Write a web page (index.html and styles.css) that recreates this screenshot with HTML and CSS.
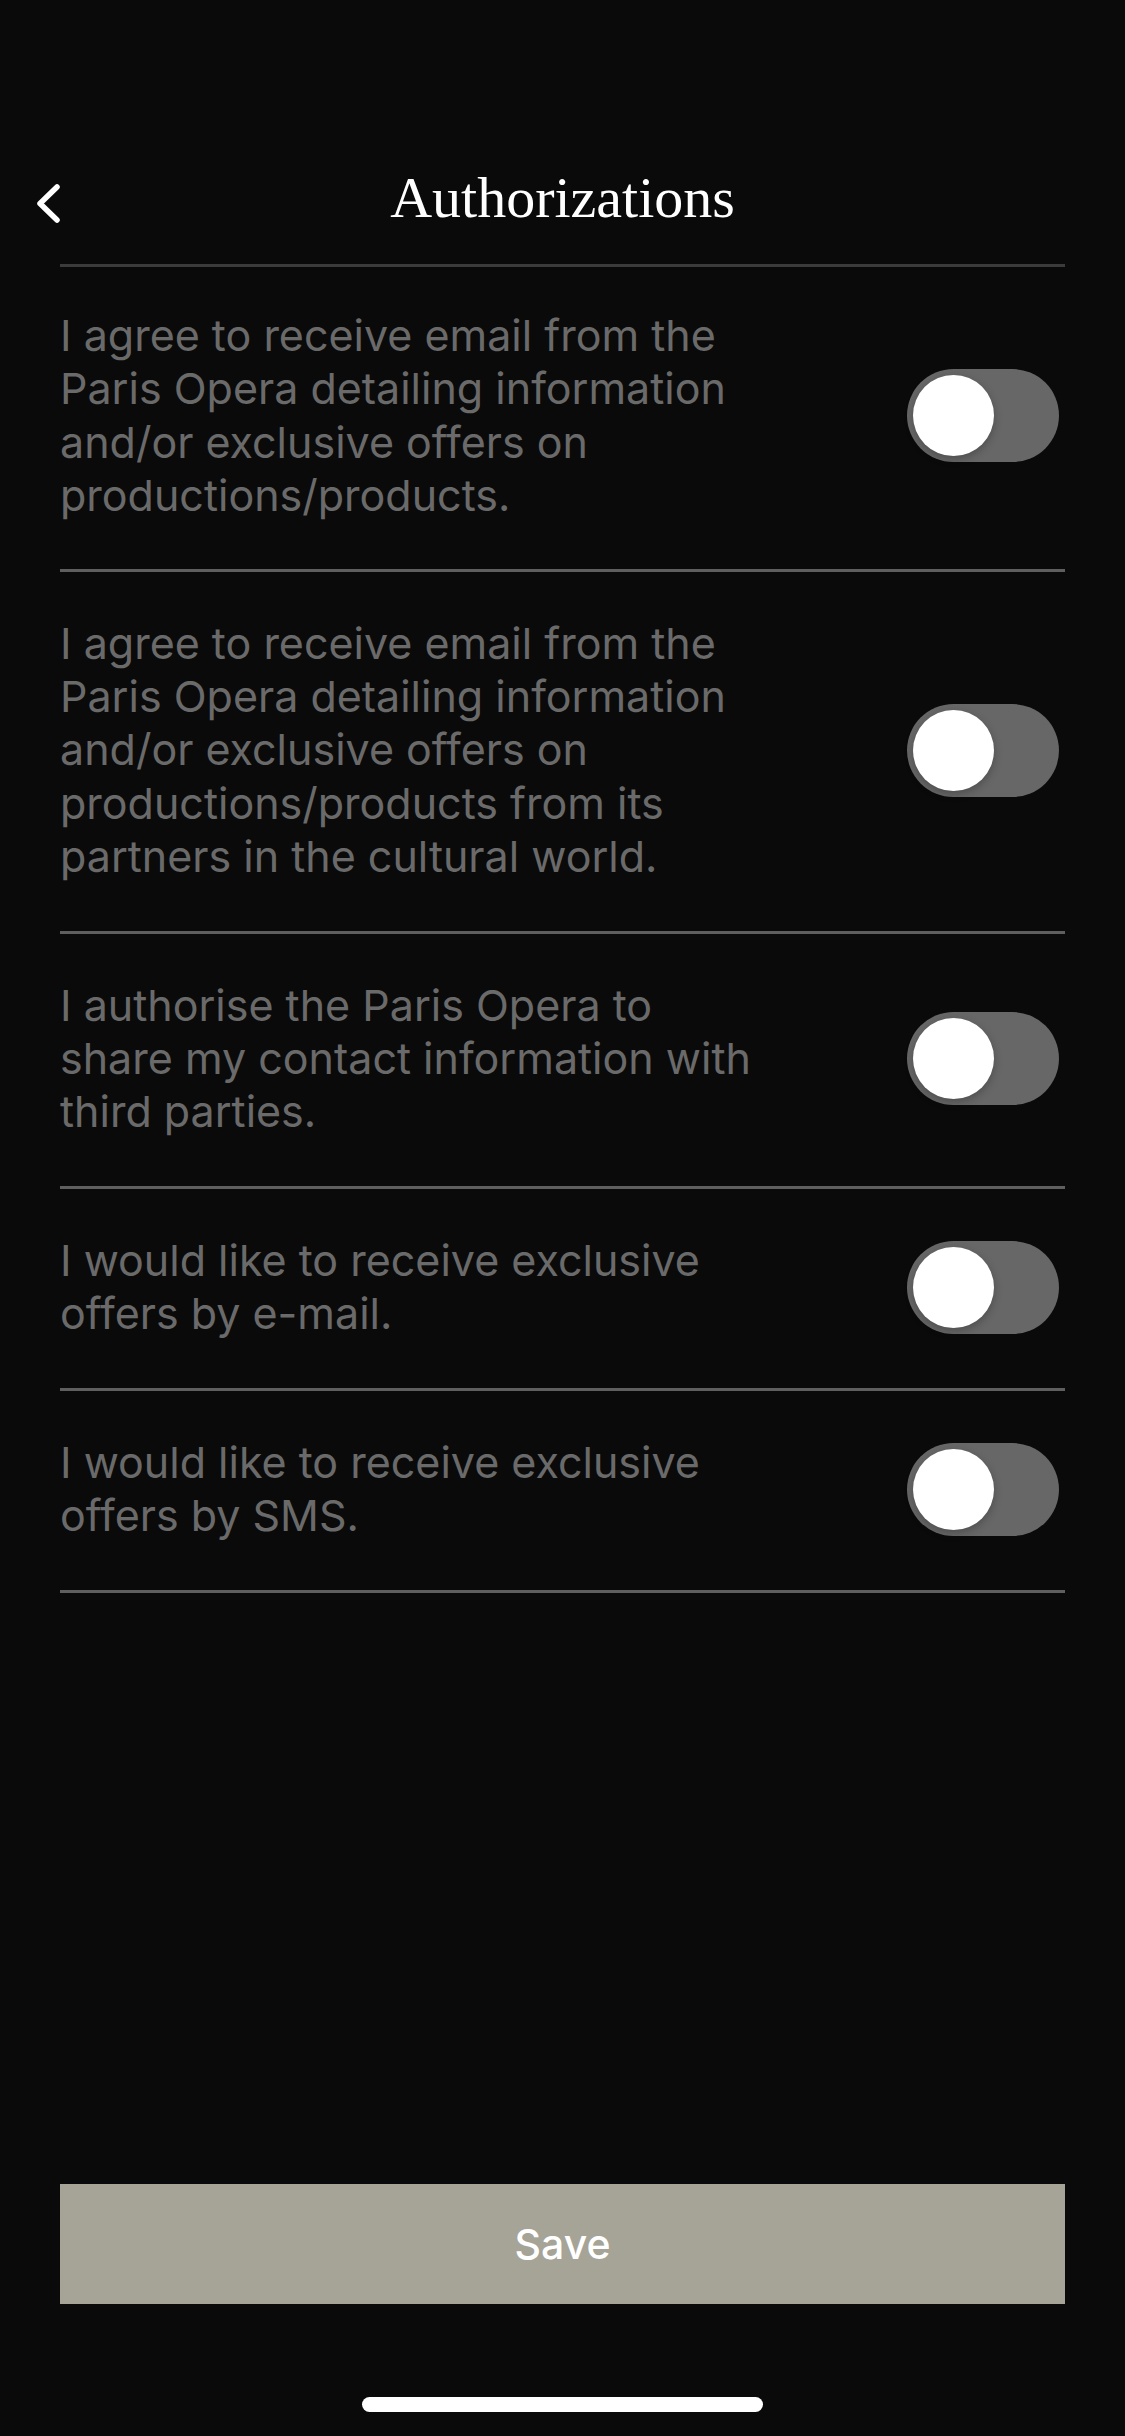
FILE: index.html
```html
<!DOCTYPE html>
<html>
	<head>
		<meta charset="UTF-8">
		<title>Authorizations</title>
		<link rel="stylesheet" href="styles.css">
	</head>
	<body>
		<header class="nav">
			<a class="back" href="#" aria-label="Back">
				<svg width="26" height="42" viewBox="0 0 26 42"><path d="M21 4 L4 20.5 L21 37" /></svg>
			</a>
			<h1 class="title">Authorizations</h1>
			<span></span>
		</header>

		<ul class="list">
			<li class="row">
				<p>I agree to receive email from the Paris Opera detailing information and/or exclusive offers on productions/products.</p>
				<span class="switch"><span class="knob"></span></span>
			</li>
			<li class="row">
				<p>I agree to receive email from the Paris Opera detailing information and/or exclusive offers on productions/products from its partners in the cultural world.</p>
				<span class="switch"><span class="knob"></span></span>
			</li>
			<li class="row">
				<p>I authorise the Paris Opera to share my contact information with third parties.</p>
				<span class="switch"><span class="knob"></span></span>
			</li>
			<li class="row">
				<p>I would like to receive exclusive offers by e-mail.</p>
				<span class="switch"><span class="knob"></span></span>
			</li>
			<li class="row">
				<p>I would like to receive exclusive offers by SMS.</p>
				<span class="switch"><span class="knob"></span></span>
			</li>
		</ul>

		<div class="spacer"></div>

		<button class="save">Save</button>
		<div class="home-bar"></div>
	</body>
</html>
```

FILE: styles.css
```css
html, body { margin: 0; padding: 0; }
body {
	background: #0a0a0a;
	color: #6a6a6a;
	font-family: Inter, "Noto Sans", sans-serif;
	height: 100vh;
	display: flex;
	flex-direction: column;
}

/* top bar */
.nav {
	display: grid;
	grid-template-columns: 1fr auto 1fr;
	align-items: center;
	padding: 166px 36px 34px;
}
.back { display: block; width: 26px; height: 42px; margin-top: 12px; }
.back svg { display: block; }
.back path { fill: none; stroke: #fff; stroke-width: 5.5; stroke-linecap: round; stroke-linejoin: round; }
.title {
	margin: 0;
	font-family: "Liberation Serif", "DejaVu Serif", serif;
	font-weight: normal;
	font-size: 58px;
	line-height: 64px;
	color: #fff;
}

/* consent rows */
.list {
	list-style: none;
	margin: 0 60px;
	padding: 0;
	border-top: 3px solid #3b3b3b;
}
.row {
	display: flex;
	align-items: center;
	justify-content: space-between;
	padding: 45px 0 47px;
	border-bottom: 3px solid #5f5f5f;
}
.row:first-child { padding-top: 42px; padding-bottom: 46px; }
.row p {
	margin: 0;
	width: 700px;
	font-size: 43px;
	line-height: 53.4px;
	color: #6a6a6a;
}

.switch {
	position: relative;
	flex: none;
	width: 152px;
	height: 93px;
	margin-right: 6px;
	border-radius: 47px;
	background: #676767;
}
.knob {
	position: absolute;
	left: 6px;
	top: 6px;
	width: 81px;
	height: 81px;
	border-radius: 50%;
	background: #fff;
	box-shadow: 0 3px 8px rgba(0, 0, 0, 0.25);
}

.spacer { flex: 1; }

.save {
	display: block;
	margin: 0 60px;
	height: 120px;
	border: 0;
	background: #a6a397;
	color: #fff;
	font-family: Inter, "Noto Sans", sans-serif;
	font-size: 41px;
	font-weight: 500;
}

.home-bar {
	width: 401px;
	height: 15px;
	margin: 93px auto 24px;
	border-radius: 8px;
	background: #fff;
}
```
